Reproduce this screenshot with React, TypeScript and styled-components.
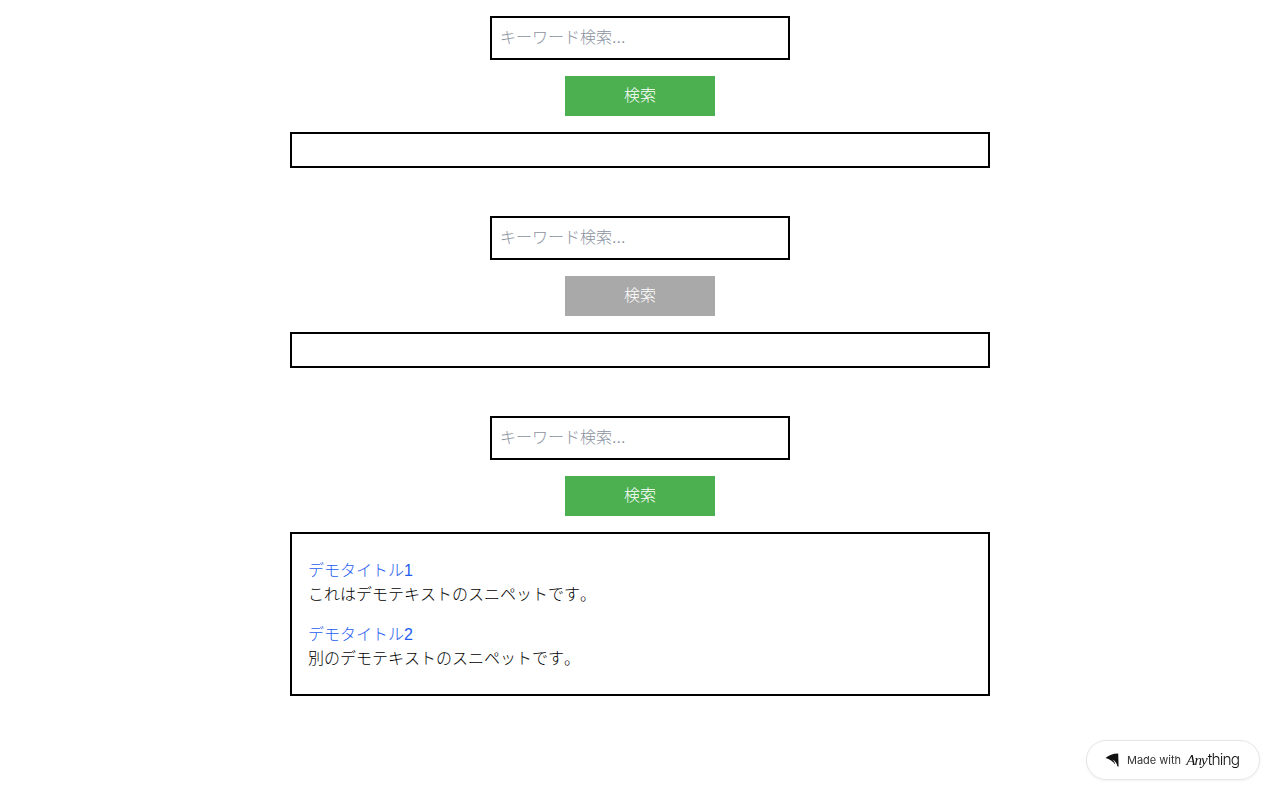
import React from 'react';
import styled, { createGlobalStyle } from 'styled-components';

const GlobalStyle = createGlobalStyle`
  html, body {
    margin: 0;
    padding: 0;
    background: #fff;
  }

  body {
    font-family: "Liberation Sans", "Noto Sans CJK JP Light", "Noto Sans CJK JP", sans-serif;
    font-size: 16px;
    line-height: 24px;
    font-kerning: none;
    color: #000;
  }

  * {
    box-sizing: border-box;
  }
`;

const Page = styled.div`
  display: flex;
  flex-direction: column;
  align-items: center;
  gap: 48px;
  padding-top: 16px;
  min-height: 800px;
`;

const SearchBlock = styled.section`
  width: 700px;
  display: flex;
  flex-direction: column;
  align-items: center;
`;

const SearchInput = styled.input`
  width: 300px;
  height: 44px;
  padding: 8px;
  border: 2px solid #000;
  border-radius: 0;
  background: #fff;
  outline: none;
  font: inherit;
  font-kerning: none;
  color: #000;

  &::placeholder {
    color: #8b93a1;
    opacity: 1;
  }
`;

const SearchButton = styled.button<{ $loading?: boolean }>`
  width: 150px;
  height: 40px;
  margin-top: 16px;
  border: none;
  padding: 0;
  background: ${({ $loading }) => ($loading ? '#a9a9a9' : '#4caf50')};
  color: #fff;
  font: inherit;
  font-kerning: none;
`;

const Results = styled.div`
  width: 100%;
  margin-top: 16px;
  padding: 16px;
  border: 2px solid #000;
`;

const ResultList = styled.div`
  display: flex;
  flex-direction: column;
  gap: 16px;
  padding: 9px 0 7px;
`;

const ResultItem = styled.article`
  display: flex;
  flex-direction: column;
`;

const ResultTitle = styled.a`
  color: #1d5cf0;
  text-decoration: none;
`;

const Snippet = styled.p`
  margin: 0;
`;

const Badge = styled.a`
  position: fixed;
  right: 20px;
  bottom: 20px;
  width: 174px;
  height: 40px;
  padding-left: 18px;
  display: flex;
  align-items: center;
  background: #fff;
  border: 1px solid #e5e5e5;
  border-radius: 20px;
  box-shadow: 0 1px 3px rgba(0, 0, 0, 0.05);
  text-decoration: none;
`;

const BadgeLabel = styled.span`
  margin-left: 8px;
  font-family: Inter, sans-serif;
  font-size: 11px;
  line-height: 14px;
  color: #333;
`;

const BadgeBrand = styled.span`
  display: inline-flex;
  align-items: baseline;
  margin-left: 5px;
  font-family: Inter, sans-serif;
  font-size: 15.5px;
  line-height: 18px;
  letter-spacing: -0.9px;
  font-weight: 300;
  color: #111;
`;

const BrandItalic = styled.span`
  font-family: "Liberation Serif", serif;
  font-style: italic;
  font-size: 15px;
  margin-right: 1px;
`;

// Swept wing mark: solid top wing with a thin blade curling under it
const LogoMark = () => (
  <svg width="14" height="14" viewBox="0 0 14 14" aria-hidden="true">
    <path
      d="M0.5 5 C3.5 2.2 8 0.6 13.2 0.5 L13.6 13.5 L12.4 13.5 C12 10.6 10.4 8 7.4 6.6 C9.2 8.2 10 10 10.2 11.6 C8 8.4 4.6 5.8 0.5 5 Z"
      fill="#111"
    />
  </svg>
);

interface IResult {
  title: string;
  snippet: string;
}

const demoResults: IResult[] = [
  { title: 'デモタイトル1', snippet: 'これはデモテキストのスニペットです。' },
  { title: 'デモタイトル2', snippet: '別のデモテキストのスニペットです。' },
];

interface ISearch {
  loading?: boolean;
  results?: IResult[];
}

const Search: React.FC<ISearch> = ({ loading, results }) => (
  <SearchBlock>
    <SearchInput type="text" placeholder="キーワード検索..." />
    <SearchButton $loading={loading}>検索</SearchButton>
    <Results>
      {results && (
        <ResultList>
          {results.map((result) => (
            <ResultItem key={result.title}>
              <ResultTitle href="#">{result.title}</ResultTitle>
              <Snippet>{result.snippet}</Snippet>
            </ResultItem>
          ))}
        </ResultList>
      )}
    </Results>
  </SearchBlock>
);

const App: React.FC = () => (
  <>
    <GlobalStyle />
    <Page lang="ja">
      <Search />
      <Search loading />
      <Search results={demoResults} />
    </Page>
    <Badge href="#">
      <LogoMark />
      <BadgeLabel>Made with</BadgeLabel>
      <BadgeBrand>
        <BrandItalic>Any</BrandItalic>
        thing
      </BadgeBrand>
    </Badge>
  </>
);

export default App;
